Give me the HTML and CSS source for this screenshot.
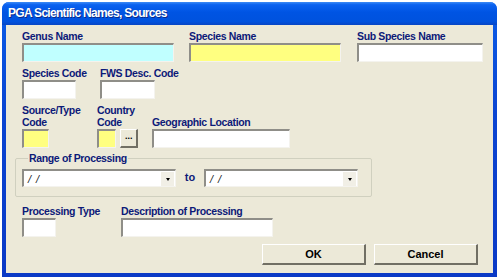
FILE: index.html
```html
<!DOCTYPE html>
<html lang="en">
<head>
    <meta charset="UTF-8">
    <title>PGA Scientific Names, Sources</title>
    <link rel="stylesheet" href="styles.css">
</head>
<body>
    <div class="window">
        <div class="titlebar">PGA Scientific Names, Sources</div>
        <div class="client">
            <div class="row row-1">
                <div class="field w-genus">
                    <label>Genus Name</label>
                    <div class="box cyan"></div>
                </div>
                <div class="field w-species">
                    <label>Species Name</label>
                    <div class="box yellow"></div>
                </div>
                <div class="field w-sub">
                    <label>Sub Species Name</label>
                    <div class="box"></div>
                </div>
            </div>

            <div class="row row-2">
                <div class="field w-code">
                    <label>Species Code</label>
                    <div class="box"></div>
                </div>
                <div class="field w-fws">
                    <label>FWS Desc. Code</label>
                    <div class="box"></div>
                </div>
            </div>

            <div class="row row-3">
                <div class="field w-source">
                    <label>Source/Type<br>Code</label>
                    <div class="box yellow"></div>
                </div>
                <div class="field w-country">
                    <label>Country<br>Code</label>
                    <div class="pick">
                        <div class="box yellow"></div>
                        <button class="dots">...</button>
                    </div>
                </div>
                <div class="field w-geo">
                    <label>Geographic Location</label>
                    <div class="box"></div>
                </div>
            </div>

            <fieldset class="group">
                <legend>Range of Processing</legend>
                <div class="combo"><span>/ /</span><i class="drop"></i></div>
                <span class="to">to</span>
                <div class="combo"><span>/ /</span><i class="drop"></i></div>
            </fieldset>

            <div class="row row-5">
                <div class="field w-ptype">
                    <label>Processing Type</label>
                    <div class="box"></div>
                </div>
                <div class="field w-desc">
                    <label>Description of Processing</label>
                    <div class="box"></div>
                </div>
            </div>

            <div class="actions">
                <button class="btn">OK</button>
                <button class="btn">Cancel</button>
            </div>
        </div>
    </div>
</body>
</html>
```

FILE: styles.css
```css
body {
    margin: 0;
    background: #fff;
    font-family: "Liberation Sans", Arial, sans-serif;
}
.window {
    margin: 2px 0 0 2px;
    width: 495px;
    height: 275px;
    border-radius: 7px 7px 0 0;
    display: flex;
    flex-direction: column;
    box-sizing: border-box;
    padding: 0 4px 4px 4px;
    background: linear-gradient(180deg, #0a5de8 0%, #0b45d2 40%, #0a39c6 100%);
}
.titlebar {
    height: 23px;
    margin: 0 -4px;
    padding-left: 6px;
    border-radius: 7px 7px 0 0;
    background: linear-gradient(180deg, #3d8bf5 0%, #0b62f0 12%, #0054e3 45%, #0052de 85%, #0746c4 100%);
    color: #fff;
    font-weight: bold;
    font-size: 12px;
    letter-spacing: -0.7px;
    line-height: 23px;
    text-shadow: 1px 1px 0 #0a2a8a;
}
.client {
    flex: 1;
    background: #ece9d8;
    padding: 5px 0 0 16px;
    position: relative;
}
.row {
    display: flex;
    align-items: flex-end;
}
.field label {
    display: block;
    white-space: nowrap;
    color: #0c1a78;
    font-weight: bold;
    font-size: 10.5px;
    letter-spacing: -0.35px;
    line-height: 12px;
    margin-bottom: 1px;
}
.box {
    height: 19px;
    box-sizing: border-box;
    background: #fff;
    border-style: solid;
    border-width: 2px 1px 1px 2px;
    border-color: #8f8e88 #f4f3ee #f4f3ee #8f8e88;
}
.cyan { background: #c0ffff; }
.yellow { background: #ffff80; }

.w-genus { width: 152px; margin-right: 15px; }
.w-species { width: 152px; margin-right: 16px; }
.w-sub { width: 126px; }

.row-2 { margin-top: 5px; }
.w-code { width: 54px; margin-right: 24px; }
.w-fws { width: 55px; }

.row-3 { margin-top: 5px; }
.w-source { width: 27px; margin-right: 48px; }
.w-country { width: 41px; margin-right: 14px; }
.w-geo { width: 138px; }
.pick { display: flex; gap: 4px; }
.pick .box { width: 20px; }
.dots {
    width: 18px;
    height: 19px;
    padding: 0 0 4px;
    font: bold 9px "Liberation Sans", sans-serif;
    background: #ece9d8;
    border-style: solid;
    border-width: 1px 2px 2px 1px;
    border-color: #fff #716f64 #716f64 #fff;
}

.group {
    margin: 4px 0 0 -7px;
    width: 357px;
    height: 45px;
    box-sizing: border-box;
    padding: 5px 0 0 6px;
    border: 1px solid #d0d0bf;
    border-radius: 2px;
    display: flex;
    align-items: flex-start;
}
.group legend {
    color: #0c1a78;
    font-weight: bold;
    font-size: 10.5px;
    letter-spacing: -0.35px;
    padding: 0 1px;
    margin-left: 6px;
    line-height: 12px;
}
.combo {
    width: 154px;
    height: 18px;
    box-sizing: border-box;
    background: #fff;
    border-style: solid;
    border-width: 2px 1px 1px 2px;
    border-color: #8f8e88 #f4f3ee #f4f3ee #8f8e88;
    display: flex;
    align-items: center;
    justify-content: space-between;
    font-size: 11px;
    font-style: italic;
    color: #222;
}
.combo span { padding-left: 4px; white-space: pre; word-spacing: 2px; }
.drop {
    width: 13px;
    height: 14px;
    margin-right: 1px;
    background: #f1efe6;
    position: relative;
}
.drop::after {
    content: "";
    position: absolute;
    left: 5px;
    top: 6px;
    border: 2px solid transparent;
    border-top: 3px solid #000;
    border-bottom: 0;
}
.to {
    width: 28px;
    text-align: center;
    color: #0c1a78;
    font-weight: bold;
    font-size: 11px;
    line-height: 17px;
}

.row-5 { margin-top: 8px; }
.w-ptype { width: 34px; margin-right: 65px; }
.w-desc { width: 152px; }

.actions {
    position: absolute;
    right: 15px;
    bottom: 8px;
    display: flex;
    gap: 8px;
}
.btn {
    width: 104px;
    height: 21px;
    background: #ece9d8;
    border-style: solid;
    border-width: 1px 2px 2px 1px;
    border-color: #fff #716f64 #716f64 #fff;
    font: bold 11px "Liberation Sans", sans-serif;
    color: #000;
    padding: 0;
}
```
